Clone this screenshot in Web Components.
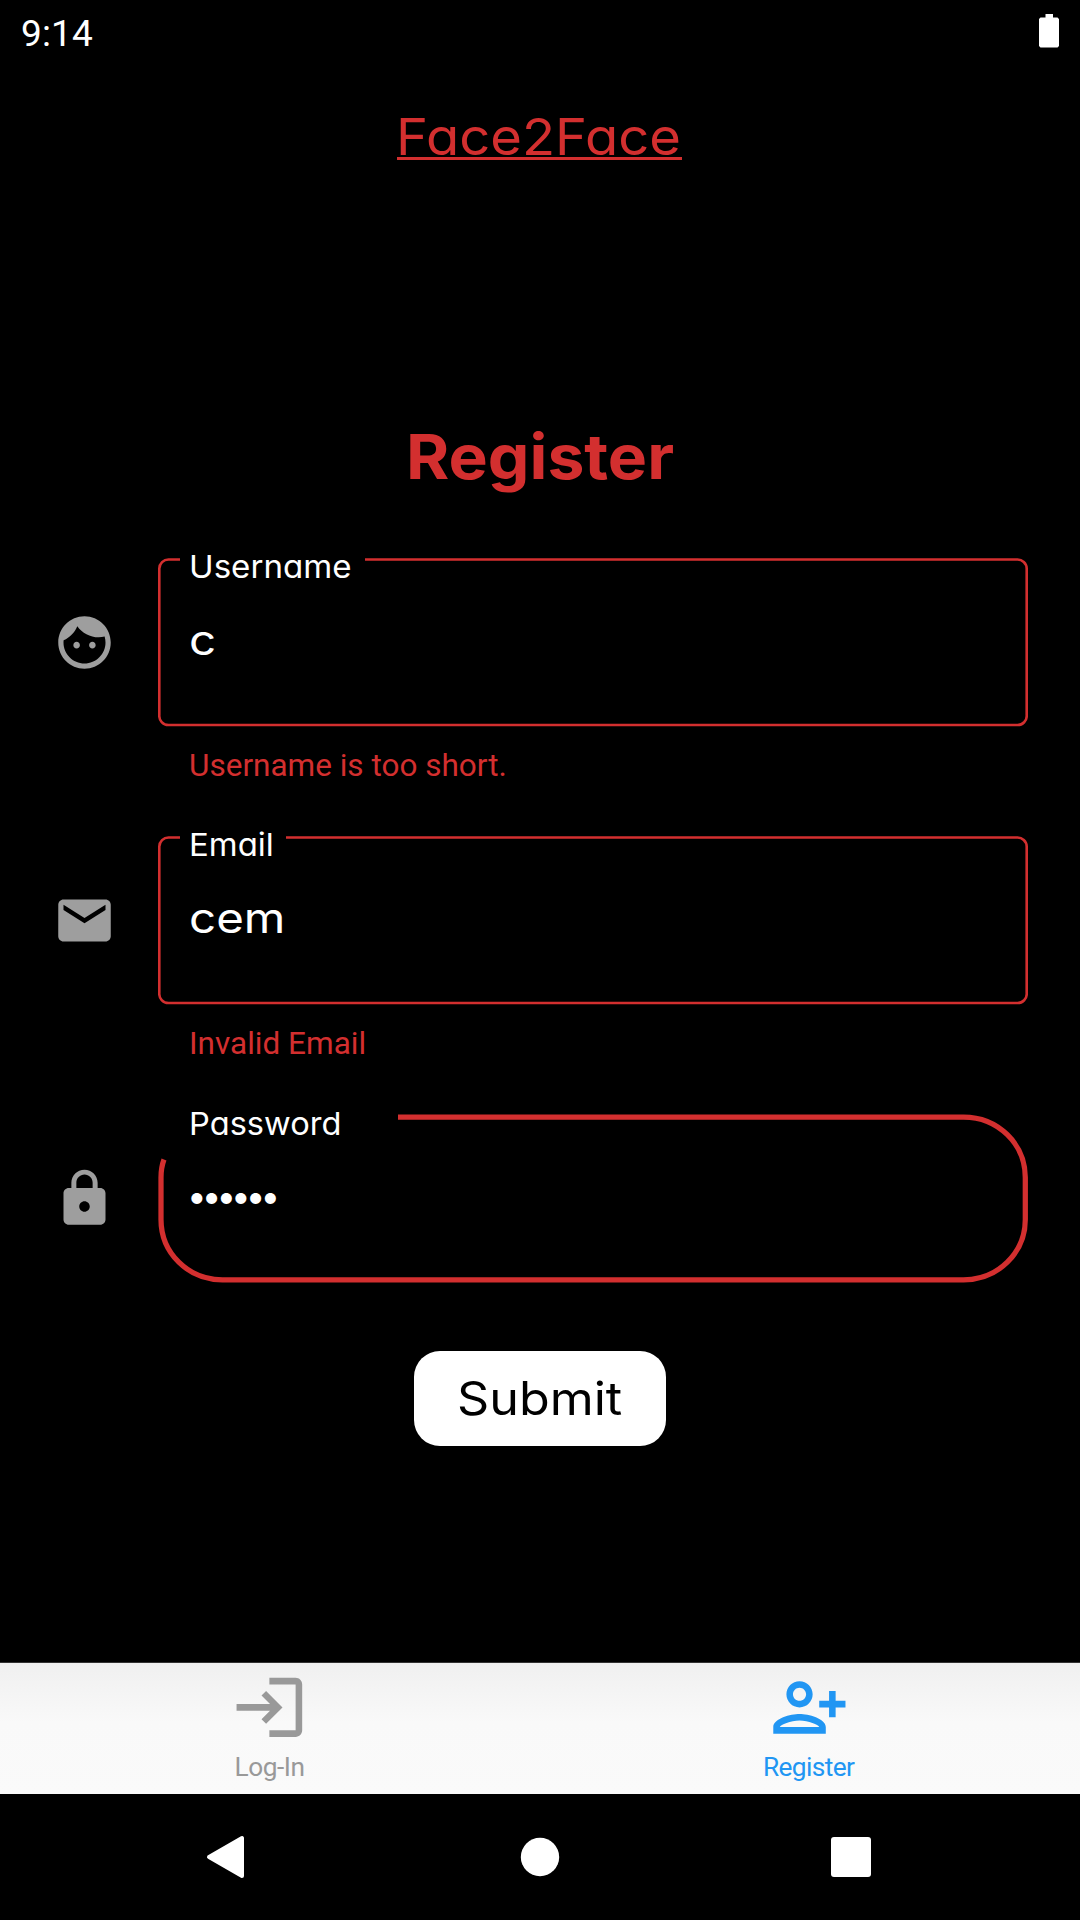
<!DOCTYPE html>
<html lang="en">
<head>
<meta charset="utf-8">
<title>Face2Face</title>
<style>
html,body{margin:0;background:#000}
body{width:1080px;height:1920px;overflow:hidden;font-family:Inter,"Liberation Sans",sans-serif;font-feature-settings:"cv11" 1}
</style>
</head>
<body>
<face-app></face-app>
<script>
const define = (name, html, setup) => customElements.define(name, class extends HTMLElement {
  connectedCallback() {
    if (this.shadowRoot) return;
    const root = this.attachShadow({mode: 'open'});
    const t = document.createElement('template');
    t.innerHTML = typeof html === 'function' ? html(this) : html;
    root.append(t.content.cloneNode(true));
    if (setup) setup(this, root);
  }
});

const ICONS = {
  face: 'M9 11.75c-.69 0-1.25.56-1.25 1.25s.56 1.25 1.25 1.25 1.25-.56 1.25-1.25-.56-1.25-1.25-1.25zm6 0c-.69 0-1.25.56-1.25 1.25s.56 1.25 1.25 1.25 1.25-.56 1.25-1.25-.56-1.25-1.25-1.25zM12 2C6.48 2 2 6.48 2 12s4.48 10 10 10 10-4.48 10-10S17.52 2 12 2zm0 18c-4.41 0-8-3.59-8-8 0-.29.02-.58.05-.86 2.36-1.05 4.23-2.98 5.21-5.37C11.07 8.33 14.05 10 17.42 10c.78 0 1.53-.09 2.25-.26.21.71.33 1.47.33 2.26 0 4.41-3.59 8-8 8z',
  mail: 'M20 4H4c-1.1 0-1.99.9-1.99 2L2 18c0 1.1.9 2 2 2h16c1.1 0 2-.9 2-2V6c0-1.1-.9-2-2-2zm0 4l-8 5-8-5V6l8 5 8-5v2z',
  lock: 'M18 8h-1V6c0-2.76-2.24-5-5-5S7 3.24 7 6v2H6c-1.1 0-2 .9-2 2v10c0 1.1.9 2 2 2h12c1.1 0 2-.9 2-2V10c0-1.1-.9-2-2-2zm-6 9c-1.1 0-2-.9-2-2s.9-2 2-2 2 .9 2 2-.9 2-2 2zm3.1-9H8.9V6c0-1.71 1.39-3.1 3.1-3.1s3.1 1.39 3.1 3.1v2z',
  login: 'M11 7L9.6 8.4l2.6 2.6H2v2h10.2l-2.6 2.6L11 17l5-5-5-5zm9 12h-8v2h8c1.1 0 2-.9 2-2V5c0-1.1-.9-2-2-2h-8v2h8v14z',
  personAdd: 'M13 8c0-2.21-1.79-4-4-4S5 5.79 5 8s1.79 4 4 4 4-1.79 4-4zm-2 0c0 1.1-.9 2-2 2s-2-.9-2-2 .9-2 2-2 2 .9 2 2zM1 18v2h16v-2c0-2.66-5.33-4-8-4s-8 1.34-8 4zm2 0c.2-.71 3.3-2 6-2 2.69 0 5.77 1.28 6 2H3zM15 10v2h3v3h2v-3h3v-2h-3V7h-2v3z'
};

define('app-icon', el => `<style>:host{display:block;flex:none}svg{display:block;width:100%;height:100%}</style>
<svg viewBox="0 0 24 24"><path fill="currentColor" d="${ICONS[el.getAttribute('name')]}"/></svg>`);

/* A single line of text whose ink spans the "ink" attribute in px.
   With "wide" the letters are widened first, and only the rest is tracked. */
define('fit-text', '<style>:host{display:block;white-space:nowrap}span{display:inline-block;transform-origin:0 50%}</style><span></span>', (el, root) => {
  const span = root.querySelector('span');
  const text = el.getAttribute('text');
  span.textContent = text;
  const ink = parseFloat(el.getAttribute('ink'));
  const cs = getComputedStyle(el);
  const ctx = document.createElement('canvas').getContext('2d');
  ctx.font = `${cs.fontWeight} ${cs.fontSize} ${cs.fontFamily}`;
  const m = ctx.measureText(text);
  const bearings = m.width - m.actualBoundingBoxLeft - m.actualBoundingBoxRight;
  const now = span.getBoundingClientRect().width - bearings;
  const scale = el.hasAttribute('wide') ? Math.min(ink / now, 1.13) : 1;
  if (text.length > 1) span.style.letterSpacing = (ink / scale - now) / (text.length - 1) + 'px';
  if (scale !== 1) span.style.transform = `scaleX(${scale})`;
  span.style.marginLeft = m.actualBoundingBoxLeft * scale + 'px';
});

define('status-bar', `<style>
:host{display:flex;justify-content:space-between;height:63px;padding:0 21px 0 22px;color:#fff}
fit-text{font:37px/40px Roboto,sans-serif;margin-top:14px}
svg{width:20px;height:35px;margin-top:14px}
</style><fit-text text="9:14" ink="70"></fit-text>
<svg viewBox="0 0 20 35"><path fill="#fff" d="M6.500 0H14V3.500H18.500L20 5V32L18.500 33.500H1.500L0 32V5L1.500 3.500H6.500Z"/></svg>`);

define('form-field', el => {
  const gap = el.getAttribute('gap');
  const outline = el.hasAttribute('focused')
    ? '<path stroke-width="5.25" d="M240 3.100H805.500C840 3.100 867.300 30 867.300 63.500V105.500C867.300 139 840 165.800 805.500 165.800H64.500C30 165.800 3 139 3 105.500V63.500Q3 53.500 6 45.500"/>'
    : `<path stroke-width="2.600" d="M${gap} 1.500H859A9.200 9.200 0 0 1 868.700 10.500V157A9.200 9.200 0 0 1 859 167H10.500A9.200 9.200 0 0 1 1.300 157V10.500A9.200 9.200 0 0 1 10.500 1.500H22"/>`;
  return `<style>
:host{display:flex;height:278px}
app-icon{width:63px;height:63px;margin:53px 42px 0 53px;color:#9e9e9e}
.field{display:grid;width:870px;align-items:start}
svg,.text{grid-area:1/1}
svg{display:block}
.text{padding-left:33px}
.label{font-size:31.5px;line-height:40px;margin-top:${el.hasAttribute('focused') ? -10 : -11}px;color:#fff}
.value{font-size:42px;line-height:60px;margin-top:23px;color:#fff}
.dots{font-size:35px;margin-top:22px}
.error{font:31.500px/40px Roboto,sans-serif;margin-top:76px;color:#d32f2f}
</style>
<app-icon name="${el.getAttribute('icon')}"></app-icon>
<div class="field"><svg width="870" height="170" fill="none" stroke="#d32f2f">${outline}</svg>
<div class="text"><fit-text wide class="label" text="${el.getAttribute('label')}" ink="${el.getAttribute('label-ink')}"></fit-text>
<fit-text ${el.hasAttribute('focused') ? 'class="value dots"' : 'wide class="value"'} text="${el.getAttribute('value')}" ink="${el.getAttribute('value-ink')}"></fit-text>
${el.hasAttribute('error') ? `<fit-text class="error" text="${el.getAttribute('error')}" ink="${el.getAttribute('error-ink')}"></fit-text>` : ''}</div></div>`;
});

define('submit-button', `<style>
:host{display:flex;justify-content:center;width:252px;height:95px;border-radius:26px;background:#fff;color:#000}
fit-text{width:162px;font-size:46px;line-height:60px;margin-top:17px}
</style><fit-text wide text="Submit" ink="163"></fit-text>`);

define('tab-item', el => `<style>
:host{display:flex;flex-direction:column;align-items:center;flex:1}
app-icon{width:78.75px;height:78.75px;margin:5.2px .600px 0 0}
fit-text{font:26.25px/30px Roboto,sans-serif;margin-top:4.900px;width:${el.getAttribute('ink')}px}
</style><app-icon name="${el.getAttribute('icon')}"></app-icon><fit-text text="${el.getAttribute('label')}" ink="${el.getAttribute('ink')}"></fit-text>`);

define('tab-bar', `<style>
:host{display:flex;height:131px;background:linear-gradient(#f0f0f0,#f9f9f9 60px,#fafafa);box-shadow:0 -1px 0 #333}
</style><slot></slot>`);

define('system-nav', `<style>
:host{display:flex;justify-content:space-between;align-items:center;height:126px;padding:0 209px 0 206px}
svg{display:block}
</style>
<svg width="38" height="44" viewBox="0 0 38 44"><path d="M3 22L36 3V41Z" fill="#fff" stroke="#fff" stroke-width="4" stroke-linejoin="round"/></svg>
<svg width="40" height="40" style="margin-left:4px"><circle cx="20" cy="20" r="19.200" fill="#fff"/></svg>
<svg width="40" height="40"><rect width="40" height="40" rx="3" fill="#fff"/></svg>`);

define('face-app', `<style>
:host{display:flex;flex-direction:column;width:1080px;height:1920px;background:#000}
header{align-self:center;width:285px;height:50px;margin:44px 2px 0 0;border-bottom:3px solid #d32f2f;color:#d32f2f;font-size:50.500px;line-height:60px}
header fit-text{padding-left:4px}
main{display:flex;flex-direction:column;flex:1}
.heading{align-self:center;width:263px;margin:257px 0 0 3px;font-size:62px;font-weight:700;line-height:80px;color:#d32f2f}
form{display:block;margin-top:61px}
submit-button{align-self:center;margin-top:-41px}
</style>
<status-bar></status-bar>
<main>
<header><fit-text wide text="Face2Face" ink="278"></fit-text></header>
<fit-text wide class="heading" text="Register" ink="263.500"></fit-text>
<form>
<form-field icon="face" label="Username" label-ink="159" value="c" value-ink="23" gap="207" error="Username is too short." error-ink="313.500"></form-field>
<form-field icon="mail" label="Email" label-ink="81" value="cem" value-ink="91" gap="128" error="Invalid Email" error-ink="173.500"></form-field>
<form-field icon="lock" label="Password" label-ink="148" value="••••••" value-ink="85.500" focused></form-field>
</form>
<submit-button></submit-button>
</main>
<tab-bar>
<tab-item icon="login" label="Log-In" ink="67" style="color:#999"></tab-item>
<tab-item icon="personAdd" label="Register" ink="90" style="color:#2196f3"></tab-item>
</tab-bar>
<system-nav></system-nav>`);
</script>
</body>
</html>
